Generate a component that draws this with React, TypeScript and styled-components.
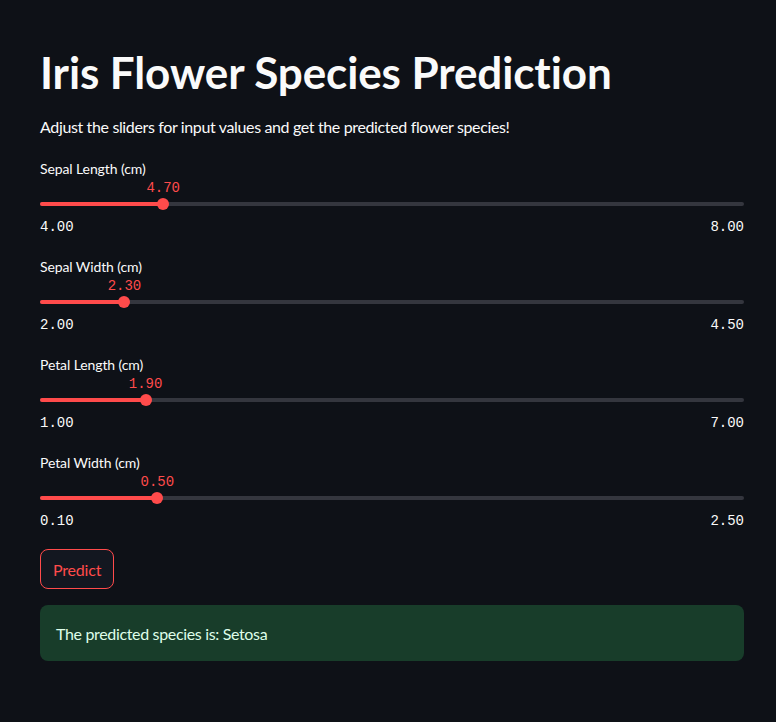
import React from "react";
import styled, { createGlobalStyle } from "styled-components";

const Global = createGlobalStyle`
  html, body { margin: 0; padding: 0; background: #0e1117; }
  body { font-family: Lato, "Open Sans", sans-serif; color: rgb(250,250,250); }
`;

const Page = styled.main`
  min-height: 722px;
  box-sizing: border-box;
  padding: 44px 32px 40px 40px;
  display: flex;
  flex-direction: column;
`;

const Title = styled.h1`
  margin: 0;
  font-size: 44px;
  line-height: 56px;
  font-weight: 700;
  letter-spacing: -0.1px;
  color: rgb(250,250,250);
`;

const Intro = styled.p`
  margin: 15px 0 0;
  font-size: 16px;
  line-height: 24px;
  letter-spacing: -0.36px;
`;

const SliderList = styled.div`
  display: flex;
  flex-direction: column;
  margin-top: 20px;
  gap: 22px;
`;

const SliderBlock = styled.div`
  display: flex;
  flex-direction: column;
`;

const Label = styled.label`
  font-size: 14px;
  line-height: 20px;
  height: 20px;
  letter-spacing: -0.1px;
`;

const SliderArea = styled.div`
  position: relative;
  height: 37px;
`;

const Track = styled.div`
  position: absolute;
  left: 0;
  right: 0;
  top: 23px;
  height: 4px;
  border-radius: 2px;
  background: rgb(52,54,62);
`;

const Fill = styled.div`
  position: absolute;
  left: 0;
  top: 0;
  bottom: 0;
  border-radius: 2px;
  background: #ff4b4b;
`;

const Thumb = styled.div`
  position: absolute;
  top: 50%;
  width: 12px;
  height: 12px;
  margin: -6px 0 0 -6px;
  border-radius: 50%;
  background: #ff4b4b;
`;

const ThumbValue = styled.div`
  position: absolute;
  top: 1px;
  transform: translateX(-50%);
  font-family: "Liberation Mono", monospace;
  font-size: 14px;
  line-height: 16px;
  color: #ff4b4b;
  white-space: nowrap;
`;

const Bounds = styled.div`
  display: flex;
  justify-content: space-between;
  margin-top: 3px;
  font-family: "Liberation Mono", monospace;
  font-size: 14px;
  line-height: 16px;
`;

const Button = styled.button`
  align-self: flex-start;
  margin-top: 20px;
  height: 40px;
  padding: 0 12px;
  border: 1px solid #ff4b4b;
  border-radius: 8px;
  background: rgb(19,23,32);
  color: #ff4b4b;
  font-family: Lato, "Open Sans", sans-serif;
  font-size: 16px;
  letter-spacing: -0.2px;
  cursor: pointer;
`;

const Alert = styled.div`
  margin-top: 16px;
  height: 56px;
  box-sizing: border-box;
  padding: 0 16px;
  display: flex;
  align-items: center;
  border-radius: 8px;
  background: rgb(24,61,42);
  color: rgb(223,253,233);
  font-size: 16px;
  letter-spacing: -0.34px;
`;

type SliderProps = { label: string; min: number; max: number; value: number };

function Slider({ label, min, max, value }: SliderProps) {
  const pct = ((value - min) / (max - min)) * 100;
  return (
    <SliderBlock>
      <Label>{label}</Label>
      <SliderArea>
        <ThumbValue style={{ left: `${pct}%` }}>{value.toFixed(2)}</ThumbValue>
        <Track>
          <Fill style={{ width: `${pct}%` }} />
          <Thumb style={{ left: `${pct}%` }} />
        </Track>
      </SliderArea>
      <Bounds>
        <span>{min.toFixed(2)}</span>
        <span>{max.toFixed(2)}</span>
      </Bounds>
    </SliderBlock>
  );
}

const sliders: SliderProps[] = [
  { label: "Sepal Length (cm)", min: 4, max: 8, value: 4.7 },
  { label: "Sepal Width (cm)", min: 2, max: 4.5, value: 2.3 },
  { label: "Petal Length (cm)", min: 1, max: 7, value: 1.9 },
  { label: "Petal Width (cm)", min: 0.1, max: 2.5, value: 0.5 },
];

export default function App() {
  return (
    <>
      <Global />
      <Page>
        <Title>Iris Flower Species Prediction</Title>
        <Intro>Adjust the sliders for input values and get the predicted flower species!</Intro>
        <SliderList>
          {sliders.map((s) => (
            <Slider key={s.label} {...s} />
          ))}
        </SliderList>
        <Button>Predict</Button>
        <Alert>The predicted species is: Setosa</Alert>
      </Page>
    </>
  );
}
